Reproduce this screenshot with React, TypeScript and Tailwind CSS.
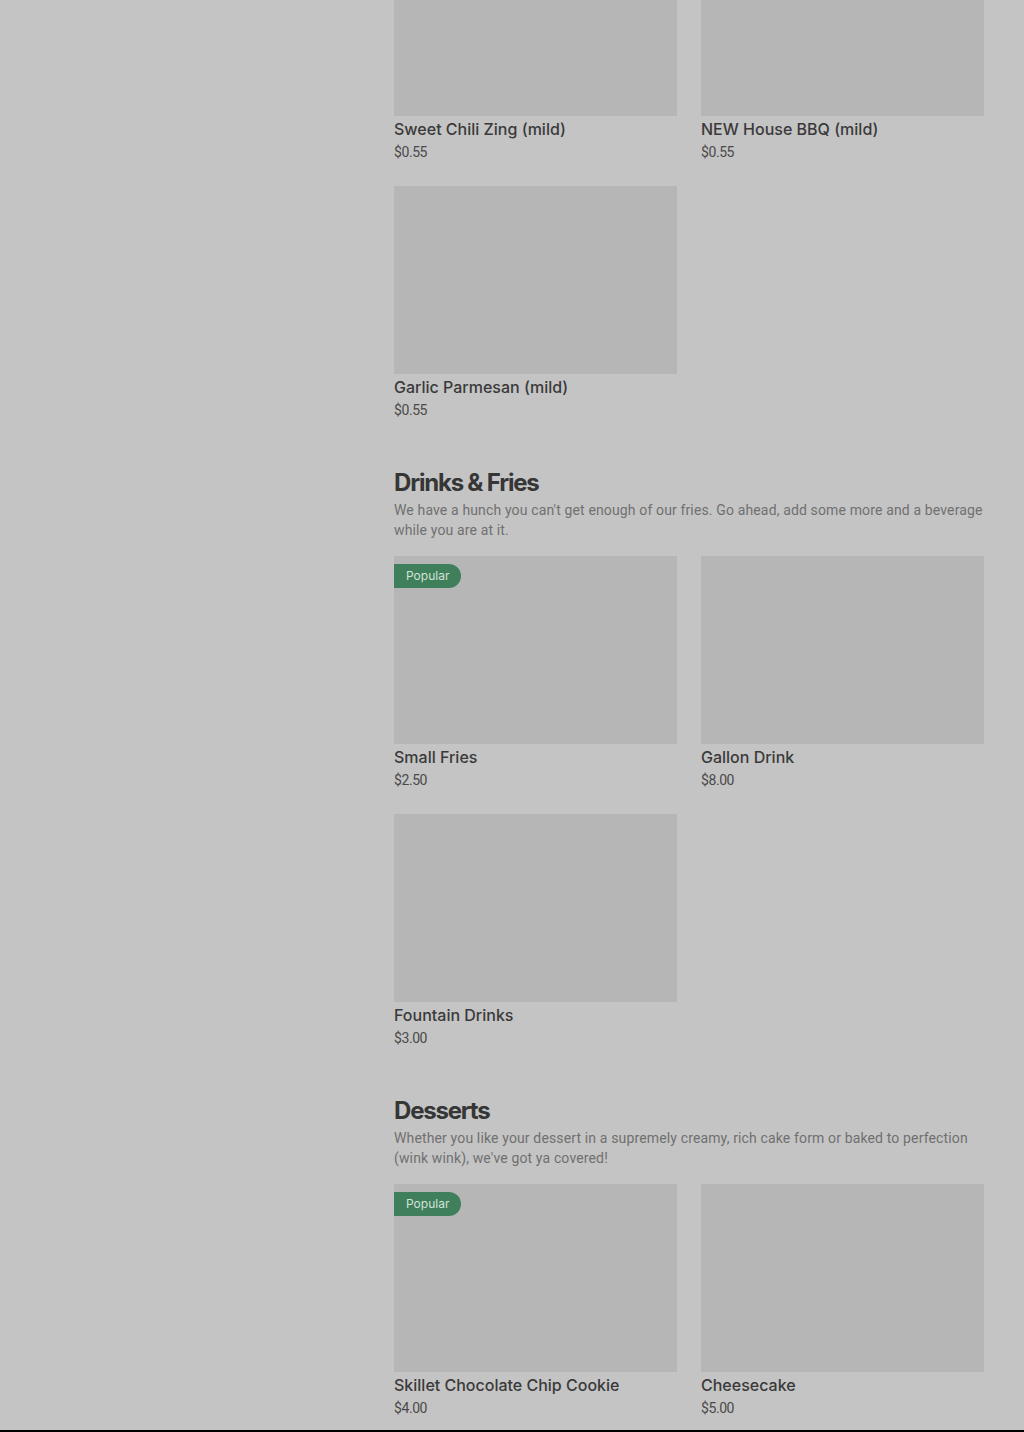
import React from 'react';

type Item = { name: string; price: string; popular?: boolean };

const font = { fontFamily: 'Inter, "Noto Sans", "Liberation Sans", sans-serif' };
const bodyFont = { fontFamily: 'Roboto, "Liberation Sans", sans-serif' };

function ItemCard({ item }: { item: Item }) {
  return (
    <div className="flex flex-col">
      <div className="relative h-[188px] w-full bg-[#b6b6b6]">
        {item.popular && (
          <span className="absolute left-0 top-2 flex h-6 items-center rounded-r-full bg-[#3f7f5b] pl-3 pr-3 text-xs text-[#d4e2d9]">
            Popular
          </span>
        )}
      </div>
      <div className="mt-[2px] text-base font-medium leading-[22px] text-[#3a3a3a]">{item.name}</div>
      <div className="mt-[2px] text-sm leading-5 tracking-[-0.03em] text-[#4a4a4a]" style={bodyFont}>
        {item.price}
      </div>
    </div>
  );
}

function Grid({ items }: { items: Item[] }) {
  return (
    <div className="grid grid-cols-2 gap-x-6 gap-y-6">
      {items.map((it) => (
        <ItemCard key={it.name} item={it} />
      ))}
    </div>
  );
}

function Section({ title, text, items }: { title: string; text: string; items: Item[] }) {
  return (
    <section className="mt-[47px]">
      <h2 className="text-2xl font-bold leading-8 tracking-[-0.05em] text-[#363636]">{title}</h2>
      <p className="mt-px text-sm leading-5 tracking-[0.01em] text-[#707070]" style={bodyFont}>
        {text}
      </p>
      <div className="mt-4">
        <Grid items={items} />
      </div>
    </section>
  );
}

export default function App() {
  return (
    <div className="flex h-[1432px] flex-col overflow-hidden bg-[#c4c4c4]" style={font}>
      <div className="flex-1">
        <div className="ml-[394px] w-[590px] -mt-[72px]">
          <Grid
            items={[
              { name: 'Sweet Chili Zing (mild)', price: '$0.55' },
              { name: 'NEW House BBQ (mild)', price: '$0.55' },
              { name: 'Garlic Parmesan (mild)', price: '$0.55' },
            ]}
          />
          <Section
            title="Drinks & Fries"
            text="We have a hunch you can't get enough of our fries. Go ahead, add some more and a beverage while you are at it."
            items={[
              { name: 'Small Fries', price: '$2.50', popular: true },
              { name: 'Gallon Drink', price: '$8.00' },
              { name: 'Fountain Drinks', price: '$3.00' },
            ]}
          />
          <Section
            title="Desserts"
            text="Whether you like your dessert in a supremely creamy, rich cake form or baked to perfection (wink wink), we've got ya covered!"
            items={[
              { name: 'Skillet Chocolate Chip Cookie', price: '$4.00', popular: true },
              { name: 'Cheesecake', price: '$5.00' },
            ]}
          />
        </div>
      </div>
      <div className="h-[2px] w-full bg-black" />
    </div>
  );
}
